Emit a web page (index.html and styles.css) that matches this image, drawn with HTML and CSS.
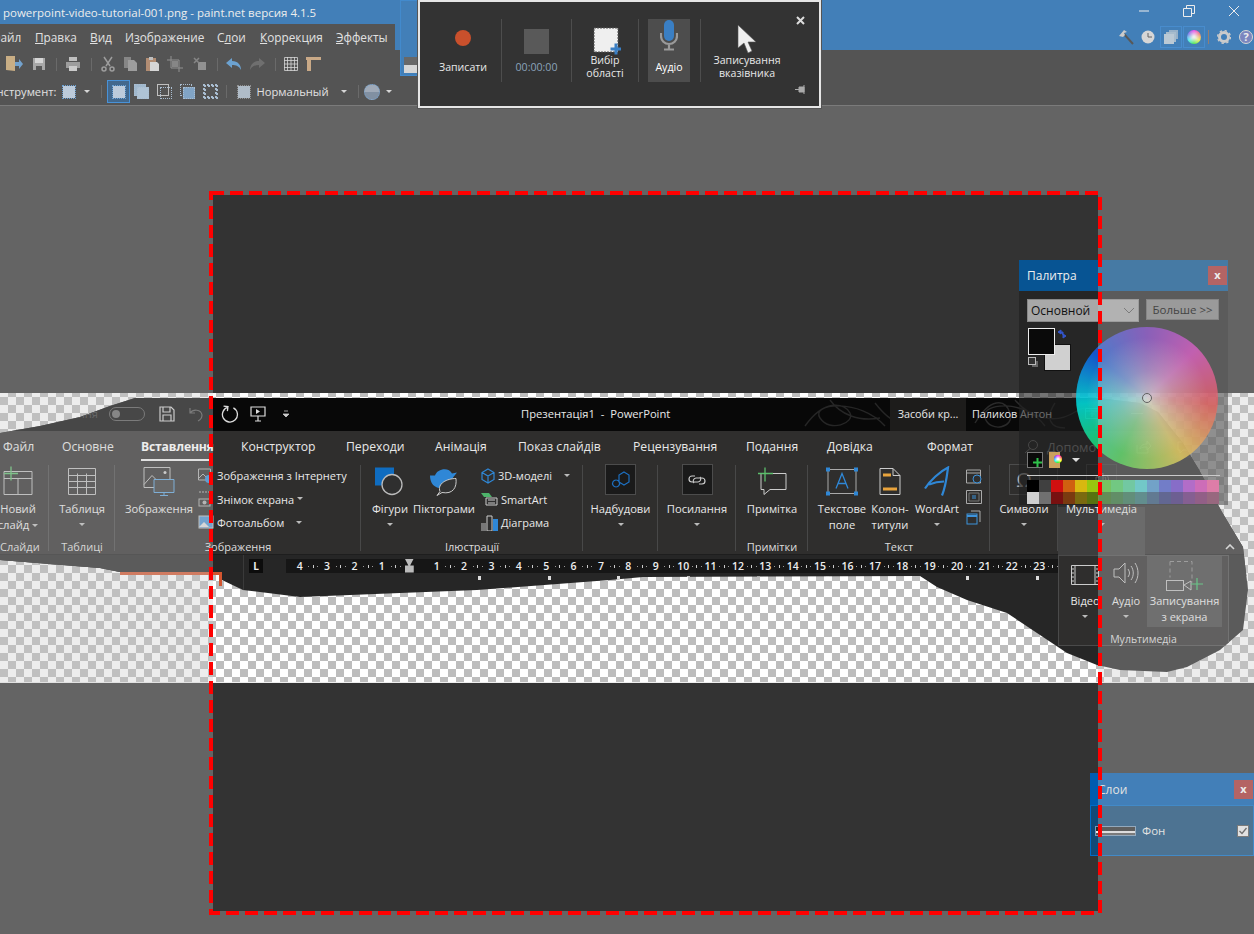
FILE: index.html
```html
<!DOCTYPE html>
<html lang="uk">
<head>
<meta charset="utf-8">
<title>paint.net</title>
<link rel="stylesheet" href="styles.css">
</head>
<body>
<div class="app">
  <header class="titlebar">
    <div class="title-row">
      <span class="app-title">powerpoint-video-tutorial-001.png - paint.net версия 4.1.5</span>
      <div class="win-ctl">
        <svg width="12" height="12" viewBox="0 0 12 12"><path d="M1 6h10" stroke="#fff" fill="none"/></svg>
        <svg width="12" height="12" viewBox="0 0 12 12"><path d="M.5 3.5h8v8h-8zM3.5 3V.5h8v8H9" stroke="#fff" fill="none"/></svg>
        <svg width="12" height="12" viewBox="0 0 12 12"><path d="M1 1l10 10M11 1L1 11" stroke="#fff" fill="none"/></svg>
      </div>
    </div>
    <div class="menu-row">
      <nav class="menu">
        <span class="m-file">Файл</span>
        <span class="m-edit"><u>П</u>равка</span>
        <span class="m-view"><u>В</u>ид</span>
        <span class="m-img">И<u>з</u>ображение</span>
        <span class="m-lay">С<u>л</u>ои</span>
        <span class="m-cor"><u>К</u>оррекция</span>
        <span><u>Э</u>ффекты</span>
      </nav>
      <div class="doc-tab"><div class="doc-thumb"></div></div>
      <div class="tool-icons">
        <svg width="16" height="16" viewBox="0 0 16 16"><path d="M6 5l9 10" stroke="#222" stroke-width="2"/><path d="M1 7l5-6 3 2-3 1 1 2-2 2z" fill="#ccc"/></svg>
        <svg width="14" height="14" viewBox="0 0 14 14"><circle cx="7" cy="7" r="6.5" fill="#ddd"/><path d="M7 3v4h4" stroke="#333" fill="none"/></svg>
        <div class="tool-box"><svg width="16" height="16" viewBox="0 0 16 16"><rect x="6" y="1" width="9" height="9" fill="#7fa6c8"/><rect x="3" y="3" width="10" height="10" fill="#97b6d0"/><rect x="1" y="5" width="10" height="10" fill="#b3c9dc"/></svg></div>
        <div class="tool-box"><div class="mini-wheel"></div></div>
        <div class="tool-sep"></div>
        <svg width="14" height="14" viewBox="0 0 14 14"><circle cx="7" cy="7" r="4.5" fill="none" stroke="#ccc" stroke-width="3"/><circle cx="7" cy="7" r="6.4" fill="none" stroke="#ccc" stroke-width="1.4" stroke-dasharray="2.4 2.6"/></svg>
        <div class="help">?</div>
      </div>
    </div>
  </header>

  <div class="toolbar">
    <svg class="t-folder" width="20" height="18" viewBox="0 0 20 18"><path d="M2 1h9v15l-9-1z" fill="#c9a264"/><path d="M11 7h4V4l4 5-4 5v-3h-4z" fill="#4a8fd0"/></svg>
    <svg class="t-save" width="14" height="14" viewBox="0 0 14 14"><path d="M1 1h12v12H1z" fill="#999"/><path d="M3 1h8v5H3z" fill="#ddd"/><path d="M4 9h6v4H4z" fill="#222"/></svg>
    <i class="sep"></i>
    <svg width="16" height="16" viewBox="0 0 16 16"><path d="M4 1h8v4H4z" fill="#bbb"/><path d="M1 6h14v6H1z" fill="#888"/><path d="M4 10h8v5H4z" fill="#ccc"/></svg>
    <i class="sep"></i>
    <svg width="16" height="16" viewBox="0 0 16 16"><path d="M4 1l6 9M12 1L6 10" stroke="#888" stroke-width="1.5" fill="none"/><circle cx="4" cy="13" r="2" fill="none" stroke="#888" stroke-width="1.5"/><circle cx="12" cy="13" r="2" fill="none" stroke="#888" stroke-width="1.5"/></svg>
    <svg width="15" height="16" viewBox="0 0 15 16"><path d="M1 1h7v11H1z" fill="#666"/><path d="M5 4h6l3 3v8H5z" fill="#888"/></svg>
    <svg width="15" height="16" viewBox="0 0 15 16"><path d="M1 2h10v13H1z" fill="#a8704a"/><path d="M4 1h4v3H4z" fill="#bbb"/><path d="M5 6h7l2 2v7H5z" fill="#ddd"/></svg>
    <svg width="16" height="16" viewBox="0 0 16 16"><path d="M4 0v12h12M0 4h12v12" stroke="#777" fill="none"/><path d="M5 5h6v6H5z" fill="#666"/></svg>
    <svg class="t-desel" width="14" height="14" viewBox="0 0 14 14"><path d="M5 5h8v8H5z" fill="#777"/><path d="M1 1l5 5M6 1L1 6" stroke="#666" stroke-width="1.5"/></svg>
    <i class="sep"></i>
    <svg width="16" height="13" viewBox="0 0 16 13"><path d="M6 0L0 5l6 5V7c4 0 7 1 9 5 0-5-3-9-9-9z" fill="#3f8fd4"/></svg>
    <svg width="16" height="13" viewBox="0 0 16 13"><path d="M10 0l6 5-6 5V7c-4 0-7 1-9 5 0-5 3-9 9-9z" fill="#444"/></svg>
    <i class="sep"></i>
    <svg width="14" height="14" viewBox="0 0 14 14"><path d="M.5.5h13v13H.5zM3.5 0v14M7 0v14M10.5 0v14M0 3.5h14M0 7h14M0 10.5h14" stroke="#ddd" fill="none" stroke-width=".8"/></svg>
    <svg width="16" height="16" viewBox="0 0 16 16"><path d="M1 1h15v3H6v11H2V4H1z" fill="#c99a68"/></svg>
  </div>

  <div class="optionsbar">
    <span class="tool-label"><span class="clip-i">Инструмент:</span></span>
    <span class="sel-icon"></span>
    <i class="caret"></i>
    <i class="sep"></i>
    <div class="modes">
      <span class="mode-active"><span class="sel-icon"></span></span>
      <span class="mode-icon m2"></span>
      <span class="mode-icon m3"></span>
      <span class="mode-icon m4"></span>
      <span class="mode-icon m5"></span>
    </div>
    <i class="sep"></i>
    <span class="sel-icon small"></span>
    <span class="mode-name">Нормальный</span>
    <i class="caret"></i>
    <i class="sep"></i>
    <span class="orb"></span>
    <i class="caret c-last"></i>
  </div>

  <main class="workspace">
    <section class="canvas">
      <div class="slide-edge"></div>
      <div class="ppt">
        <div class="ppt-title">
          <svg class="swirl" width="300" height="33" viewBox="0 0 300 33"><path d="M5 28C25 0 45 5 50 15S30 35 20 20 60 0 85 28M30 2c10 14 28 22 50 18M75 5c20 25 30 20 20 5" fill="none" stroke="#262626" stroke-width="1.4"/><path d="M175 25c15-25 30-25 35-10s-20 20-25 5 40-20 60 8M215 2c15 18 40 25 60 12s25 10 20 16M255 5c-10 15-5 25 10 25" fill="none" stroke="#2a2a2a" stroke-width="1.4"/></svg>
          <div class="qat">
            <span class="toggle-label">ння</span>
            <span class="toggle"><b></b></span>
            <svg width="16" height="16" viewBox="0 0 16 16"><path d="M1 1h11l3 3v11H1zM4 1v5h7V1M4 15v-6h8v6" fill="none" stroke="#ccc" stroke-width="1.2"/></svg>
            <svg width="16" height="16" viewBox="0 0 16 16"><path d="M2 2v5h5M2 7c3-4 11-4 12 2 0 3-2 5-4 6" fill="none" stroke="#555" stroke-width="1.2"/></svg>
            <svg class="q-redo" width="18" height="18" viewBox="0 0 18 18"><path d="M6.500 2.500a7.500 7.500 0 1 0 5 0M6 6.500v-4.500h-4.500" transform="rotate(8 9 9)" fill="none" stroke="#ddd" stroke-width="1.300"/></svg>
            <svg width="16" height="16" viewBox="0 0 16 16"><path d="M1 1h14v9H1zM8 10v5M5 15h6" fill="none" stroke="#ddd" stroke-width="1.2"/><path d="M6 3l4 2.5L6 8z" fill="#ddd"/></svg>
            <svg class="q-more" width="8" height="8" viewBox="0 0 8 8"><path d="M2 1h4M1 4h6l-3 3z" stroke="#ccc" fill="#ccc" stroke-width=".8"/></svg>
          </div>
          <span class="doc-title">Презентація1 &nbsp;-&nbsp; PowerPoint</span>
          <span class="tools-ctx">Засоби кр...</span>
          <span class="user">Паликов Антон</span>
          <svg class="w-mon" width="14" height="12" viewBox="0 0 14 12"><path d="M.5 .5h13v10H.5zM.5 3h13M7 9V5M5 6.5L7 4.5 9 6.5" stroke="#4a9a8a" fill="none"/></svg>
          <span class="w-min"></span>
        </div>
        <nav class="ppt-tabs">
          <span>Файл</span><span>Основне</span><span class="tab-active">Вставлення</span><span>Конструктор</span><span>Переходи</span><span>Анімація</span><span>Показ слайдів</span><span>Рецензування</span><span>Подання</span><span>Довідка</span><span>Формат</span>
          <span class="tab-search"><svg width="15" height="15" viewBox="0 0 15 15"><circle cx="9" cy="6" r="4.5" fill="none" stroke="#888"/><path d="M6 9.5L1 14" stroke="#888"/></svg>Допомо</span>
        </nav>
        <div class="tab-actions">
          <span class="act"><svg width="16" height="14" viewBox="0 0 16 14"><path d="M1 5v8h11V9M4 9c0-3 3-5 7-5V1l4 5-4 4V7c-3 0-5 0-7 2z" fill="none" stroke="#bbb"/></svg></span>
          <span class="act"><svg width="14" height="13" viewBox="0 0 14 13"><path d="M1 1h12v8H6l-3 3V9H1z" fill="none" stroke="#bbb"/></svg></span>
        </div>
        <div class="ppt-groups">
          <section class="grp g-slides">
            <div class="grp-body">
              <button class="big">
                <svg class="ico" width="30" height="30" viewBox="0 0 30 30"><path d="M1 5h28v23H1zM1 12h28M15 12v16" fill="none" stroke="#bbb"/><path d="M8 0v14M1 7h14" stroke="#5cbf6c" stroke-width="1.3"/></svg>
                <span>Новий<br>слайд<i class="tri in"></i></span>
              </button>
            </div>
            <h4>Слайди</h4>
          </section>
          <section class="grp g-tables">
            <div class="grp-body">
              <button class="big">
                <svg class="ico" width="28" height="28" viewBox="0 0 28 28"><path d="M.5 1h27v26H.5zM0 8h28M0 14h28M0 20h28M9.5 6v21M18.5 6v21" fill="none" stroke="#bbb"/></svg>
                <span>Таблиця</span><i class="tri"></i>
              </button>
            </div>
            <h4>Таблиці</h4>
          </section>
          <section class="grp g-images">
            <div class="grp-body">
              <button class="big b-img">
                <svg class="ico" width="32" height="30" viewBox="0 0 32 30"><path d="M1 1h26v20H1z" fill="none" stroke="#bbb"/><path d="M1 18l8-9 9 9" fill="none" stroke="#bbb"/><circle cx="22" cy="6" r="1.5" fill="#ccc"/><path d="M11 13h20v13H11z" fill="#3a3a3a" stroke="#5aa2dc"/><path d="M21 26v3M17 29h8" stroke="#5aa2dc"/></svg>
                <span>Зображення</span>
              </button>
              <ul class="mini-list">
                <li><svg width="16" height="16" viewBox="0 0 16 16"><path d="M.5 1h12v11H.5zM1 10l4-4 3 3" fill="none" stroke="#aaa"/><circle cx="11" cy="11" r="4" fill="#2f87d6"/></svg>Зображення з Інтернету</li>
                <li><svg width="16" height="16" viewBox="0 0 16 16"><path d="M1 1h13v8" fill="none" stroke="#aaa" stroke-dasharray="2 1"/><rect x="1" y="8" width="11" height="7" fill="none" stroke="#aaa"/><circle cx="6.5" cy="11.5" r="2" fill="#aaa"/></svg>Знімок екрана<i class="tri in"></i></li>
                <li><svg width="16" height="16" viewBox="0 0 16 16"><rect x="1" y="1" width="14" height="12" fill="#4a90d0" stroke="#bbb"/><path d="M1 12l5-5 5 5z" fill="#ddd"/></svg>Фотоальбом<i class="tri far"></i></li>
              </ul>
            </div>
            <h4>Зображення</h4>
          </section>
          <section class="grp g-illus">
            <div class="grp-body">
              <button class="big b-shape">
                <svg class="ico" width="32" height="30" viewBox="0 0 32 30"><rect x="1" y="1" width="19" height="18" fill="#0f6cc0"/><circle cx="18" cy="18" r="10" fill="#2f2f2f" stroke="#bbb" stroke-width="1.3"/></svg>
                <span>Фігури</span><i class="tri"></i>
              </button>
              <button class="big b-pict">
                <svg class="ico" width="30" height="30" viewBox="0 0 30 30"><path d="M1 9h5c2-7 14-9 17-2l5-1-4 5c0 8-9 12-16 10C3 19 1 14 1 9z" fill="#2f87d6"/><path d="M8 29l3-4c-3-8 7-13 16-13 1 9-3 16-14 14z" fill="#333" stroke="#ccc"/></svg>
                <span>Піктограми</span>
              </button>
              <ul class="mini-list l-3d">
                <li><svg width="14" height="16" viewBox="0 0 14 16"><path d="M7 1l6 3.500v7L7 15l-6-3.500v-7zM1 4.500L7 8l6-3.500M7 8v7" fill="none" stroke="#2f87d6" stroke-width="1.2"/></svg>3D-моделі<i class="tri far"></i></li>
                <li><svg width="17" height="14" viewBox="0 0 17 14"><path d="M0 1h8l3 4H3z" fill="#4db36a"/><path d="M5 6h11v7H5z" fill="#2f2f2f" stroke="#ccc"/><path d="M7 8h7M7 11h7" stroke="#ccc"/></svg>SmartArt</li>
                <li><svg width="17" height="16" viewBox="0 0 17 16"><path d="M0 8h5v8H0z" fill="#777"/><path d="M6 1h5v15H6z" fill="#2f2f2f" stroke="#ccc"/><path d="M12 4h5v12h-5z" fill="#2f87d6"/></svg>Діаграма</li>
              </ul>
            </div>
            <h4>Ілюстрації</h4>
          </section>
          <section class="grp g-add">
            <div class="grp-body">
              <button class="big boxed">
                <span class="ico-box"><svg width="20" height="20" viewBox="0 0 20 20"><path d="M13 2l5 3v7l-5 3-5-3V5zM5 10a3.500 3.500 0 1 0 .1 0" fill="none" stroke="#1d6fc0" stroke-width="1.2"/></svg></span>
                <span>Надбудови</span><i class="tri"></i>
              </button>
            </div>
          </section>
          <section class="grp g-link">
            <div class="grp-body">
              <button class="big boxed">
                <span class="ico-box"><svg width="20" height="14" viewBox="0 0 20 14"><path d="M8 3H5a3 3 0 0 0 0 6h6a3 3 0 0 0 2-5M12 11h3a3 3 0 0 0 0-6H9a3 3 0 0 0-2 5" fill="none" stroke="#ccc" stroke-width="1.2"/></svg></span>
                <span>Посилання</span><i class="tri"></i>
              </button>
            </div>
          </section>
          <section class="grp g-note">
            <div class="grp-body">
              <button class="big">
                <svg class="ico" width="30" height="28" viewBox="0 0 30 28"><path d="M4 6h25v16H13l-6 5v-5H4z" fill="none" stroke="#ccc"/><path d="M8 0v14M1 6h15" stroke="#5cbf6c" stroke-width="1.3"/></svg>
                <span>Примітка</span>
              </button>
            </div>
            <h4>Примітки</h4>
          </section>
          <section class="grp g-text">
            <div class="grp-body">
              <button class="big b-tb">
                <svg class="ico" width="32" height="28" viewBox="0 0 32 28"><path d="M2 2h28v24H2z" fill="none" stroke="#aaa"/><path d="M10 21l6-15 6 15M12 16h8" fill="none" stroke="#2f87d6" stroke-width="1.3"/><path d="M0 0h4v4H0zM28 0h4v4h-4zM0 24h4v4H0zM28 24h4v4h-4z" fill="#2f87d6"/></svg>
                <span>Текстове<br>поле</span>
              </button>
              <button class="big b-hf">
                <svg class="ico" width="22" height="28" viewBox="0 0 22 28"><path d="M1 1h13l7 7v19H1zM14 1v7h7" fill="none" stroke="#ccc"/><path d="M4 6h8v3H4zM4 20h14v3H4z" fill="#e8a33c"/></svg>
                <span>Колон-<br>титули</span>
              </button>
              <button class="big b-wa">
                <svg class="ico" width="26" height="30" viewBox="0 0 26 30"><path d="M1 22C6 14 16 5 24 1c-1 8-2 18-6 28M5 18c5-2 10-3 15-3" fill="none" stroke="#2f87d6" stroke-width="2.200"/></svg>
                <span>WordArt</span><i class="tri"></i>
              </button>
              <div class="mini-ico">
                <svg width="16" height="16" viewBox="0 0 16 16"><path d="M.5 2h14v13H.5zM0 5h15" fill="none" stroke="#aaa"/><circle cx="11" cy="11" r="4" fill="#2f2f2f" stroke="#3d93db"/></svg>
                <svg width="16" height="14" viewBox="0 0 16 14"><path d="M.5 .5h15v13H.5z" fill="none" stroke="#aaa"/><path d="M3 3h10v8H3z" fill="none" stroke="#777"/><path d="M6 6h4M6 8h4" stroke="#3d93db"/></svg>
                <svg width="15" height="16" viewBox="0 0 15 16"><path d="M5 1h9v11" fill="none" stroke="#aaa"/><rect x="1" y="4" width="10" height="10" fill="none" stroke="#3d93db"/><path d="M1 6h10" stroke="#3d93db" stroke-width="2"/></svg>
              </div>
            </div>
            <h4>Текст</h4>
          </section>
          <section class="grp g-sym">
            <div class="grp-body">
              <button class="big boxed">
                <span class="ico-box plain"><span class="omega">Ω</span></span>
                <span>Символи</span><i class="tri"></i>
              </button>
            </div>
          </section>
          <section class="grp g-media">
            <div class="grp-body">
              <button class="big boxed">
                <span class="ico-box plain"><svg width="16" height="16" viewBox="0 0 16 16"><path d="M2 5h3l4-4v14l-4-4H2zM11 5c1 2 1 4 0 6M13 3c2 3 2 7 0 10" fill="none" stroke="#aaa"/></svg></span>
                <span>Мультимедіа</span><i class="tri"></i>
              </button>
            </div>
          </section>
          <svg class="collapse" width="10" height="6" viewBox="0 0 10 6"><path d="M1 5l4-4 4 4" fill="none" stroke="#ddd" stroke-width="1.600"/></svg>
        </div>
        <div class="ruler-bar">
          <span class="l-box">L</span>
          <div class="ruler">
            <span>4</span><span>3</span><span>2</span><span>1</span><span class="r-mark"></span><span>1</span><span>2</span><span>3</span><span>4</span><span>5</span><span>6</span><span>7</span><span>8</span><span>9</span><span>10</span><span>11</span><span>12</span><span>13</span><span>14</span><span>15</span><span>16</span><span>17</span><span>18</span><span>19</span><span>20</span><span>21</span><span>22</span><span>23</span>
          </div>
          <div class="ticks"><i></i><i></i><i></i><i></i><i></i><i></i><i></i><i></i><i></i></div>
        </div>
        <div class="media-pop">
          <div class="pop-body">
            <button class="pop-btn p-vid">
              <svg width="28" height="20" viewBox="0 0 28 20"><path d="M.5 .5h27v19H.5zM4 0v20M24 0v20" fill="none" stroke="#ccc"/><path d="M2 3v14M26 3v14" stroke="#ccc" stroke-dasharray="2 2"/></svg>
              <span>Відео</span><i class="tri"></i>
            </button>
            <button class="pop-btn p-aud">
              <svg width="27" height="24" viewBox="0 0 27 24"><path d="M1 8h5l6-6v20l-6-6H1zM15 8c2 3 2 5 0 8M18 5c3 4 3 10 0 14M22 2c4 6 4 14 0 20" fill="none" stroke="#bbb"/></svg>
              <span>Аудіо</span><i class="tri"></i>
            </button>
            <button class="pop-btn p-rec">
              <svg width="38" height="30" viewBox="0 0 38 30"><path d="M4 .5h22v21" fill="none" stroke="#888" stroke-dasharray="4 3"/><path d="M4 .5v16" fill="none" stroke="#888" stroke-dasharray="4 3"/><rect x=".5" y="19.500" width="17" height="10" fill="none" stroke="#bbb"/><path d="M18 24l7-4v9z" fill="none" stroke="#bbb"/><path d="M31 17v12M25 23h12" stroke="#3cc36a" stroke-width="1.200"/></svg>
              <span>Записування<br>з екрана</span>
            </button>
          </div>
          <h4>Мультимедіа</h4>
        </div>
      </div>
    </section>

    <aside class="palette">
      <div class="pal-title"><span>Палитра</span><span class="x">x</span></div>
      <div class="pal-body">
        <div class="pal-top">
          <div class="pal-select">Основной<svg width="12" height="7" viewBox="0 0 12 7"><path d="M1 1l5 5 5-5" fill="none" stroke="#555"/></svg></div>
          <div class="pal-more">Больше &gt;&gt;</div>
        </div>
        <div class="pal-main">
          <div class="pal-left">
            <div class="swatches">
              <span class="sw-back"></span><span class="sw-fore"></span>
              <svg class="sw-swap" width="10" height="10" viewBox="0 0 10 10"><path d="M1 3l3-2v4zM9 7L6 5v4zM3 3h3v3" fill="#35c" stroke="#35c"/></svg>
              <span class="sw-reset"></span>
            </div>
            <div class="pal-tools">
              <span class="add-sw"><svg width="9" height="9" viewBox="0 0 9 9"><path d="M4.500 0v9M0 4.500h9" stroke="#2fc14a" stroke-width="2"/></svg></span>
              <span class="book"><b class="mini-wheel"></b></span>
              <i class="tri big-tri"></i>
            </div>
          </div>
          <div class="wheel"><span class="wheel-dot"></span></div>
        </div>
        <div class="pal-line"></div>
        <div class="pal-colors">
          <i class="c1"></i><i class="c2"></i><i class="c3"></i><i class="c4"></i><i class="c5"></i><i class="c6"></i><i class="c7"></i><i class="c8"></i><i class="c9"></i><i class="c10"></i><i class="c11"></i><i class="c12"></i><i class="c13"></i><i class="c14"></i><i class="c15"></i><i class="c16"></i>
          <i class="d1"></i><i class="d2"></i><i class="d3"></i><i class="d4"></i><i class="d5"></i><i class="d6"></i><i class="d7"></i><i class="d8"></i><i class="d9"></i><i class="d10"></i><i class="d11"></i><i class="d12"></i><i class="d13"></i><i class="d14"></i><i class="d15"></i><i class="d16"></i>
        </div>
      </div>
    </aside>

    <aside class="layers">
      <div class="lay-title"><span>Слои</span><span class="x">x</span></div>
      <div class="lay-row">
        <span class="lay-thumb"></span>
        <span class="lay-name">Фон</span>
        <svg class="lay-check" width="12" height="12" viewBox="0 0 12 12"><rect x=".5" y=".5" width="11" height="11" fill="#eee" stroke="#555"/><path d="M2.500 6l2.500 2.500L9.500 3" fill="none" stroke="#444" stroke-width="1.300"/></svg>
      </div>
    </aside>
  </main>

  <div class="selection">
    <svg class="dash" width="893" height="724" viewBox="0 0 893 724"><rect x="2" y="2" width="889" height="720" fill="none" stroke="#f00" stroke-width="4" stroke-dasharray="13 6"/></svg>
  </div>

  <aside class="recorder">
    <div class="rec-item r-rec">
      <div class="rec-ico"><span class="rec-dot"></span></div>
      <div class="rec-lab">Записати</div>
    </div>
    <div class="rec-item r-time">
      <div class="rec-ico"><span class="rec-stop"></span></div>
      <div class="rec-lab time">00:00:00</div>
    </div>
    <div class="rec-item r-area">
      <div class="rec-ico">
        <svg width="28" height="28" viewBox="0 0 28 28"><rect x="1" y="1" width="24" height="24" fill="#efefef" stroke="#555" stroke-dasharray="2 1"/><path d="M22 17h3v4h4v3h-4v4h-3v-4h-4v-3h4z" transform="translate(-.5 -.5)" fill="#3a7fc4"/></svg>
      </div>
      <div class="rec-lab">Вибір<br>області</div>
    </div>
    <div class="rec-item r-aud">
      <div class="aud-on">
        <div class="rec-ico">
          <svg width="18" height="31" viewBox="0 0 18 31"><rect x="4" y="0" width="10" height="21" rx="5" fill="#3a7fc4"/><path d="M1 13v3a8 8 0 0 0 16 0v-3M9 24v5M4 29.500h10" fill="none" stroke="#9a9a9a" stroke-width="2.200"/></svg>
        </div>
        <div class="rec-lab on">Аудіо</div>
      </div>
    </div>
    <div class="rec-item r-ptr">
      <div class="rec-ico">
        <svg width="20" height="30" viewBox="0 0 20 30"><path d="M1 1v23l6-5 4 10 4-2-4-9h8z" fill="#efefef" stroke="#555" stroke-width=".6"/></svg>
      </div>
      <div class="rec-lab">Записування<br>вказівника</div>
    </div>
    <div class="rec-side">
      <svg width="9" height="9" viewBox="0 0 9 9"><path d="M1 1l7 7M8 1L1 8" stroke="#ddd" stroke-width="2"/></svg>
      <svg width="11" height="9" viewBox="0 0 11 9"><path d="M0 4.500h4M4 2h5v5H4zM9 0v9" fill="#aaa" stroke="#aaa"/></svg>
    </div>
  </aside>
</div>
</body>
</html>
```
FILE: styles.css
```css
* { box-sizing: border-box; }
html, body { margin: 0; height: 100%; }
body { overflow: hidden; background: #333; font-family: "Open Sans", "Noto Sans", "DejaVu Sans", sans-serif; color: #eee; }
ul { list-style: none; margin: 0; padding: 0; }
h4 { margin: 0; font-weight: 400; }
button { all: unset; box-sizing: border-box; }
i { font-style: normal; display: block; }
.app { position: relative; width: 1254px; height: 934px; overflow: hidden; }

.titlebar { background: #005cb0; height: 50px; position: relative; }
.title-row { height: 24px; display: flex; align-items: center; justify-content: space-between; }
.app-title { font-size: 11.500px; margin-left: 3px; color: #fff; white-space: nowrap; }
.win-ctl { display: flex; gap: 33px; margin-right: 14px; margin-top: -3px; }
.menu-row { display: flex; height: 26px; }
.menu { width: 395px; background: #1c1c1c; display: flex; align-items: center; font-size: 11.800px; color: #eee; overflow: hidden; white-space: nowrap; }
.menu span { flex: none; }
.m-file { margin-left: -9px; width: 44px; }
.m-edit { width: 55px; }
.m-view { width: 35px; }
.m-img { width: 92px; }
.m-lay { width: 43px; }
.m-cor { width: 76px; }
.doc-tab { position: relative; width: 19px; height: 76px; margin: -24px 0 0 5px; background: #005cb0; border: 1px solid #006cd0; }
.doc-thumb { position: absolute; left: 3px; top: 56px; width: 15px; height: 16px; background: linear-gradient(#3a3a3a 0 50%, #ddd 50%); }
.tool-icons { position: absolute; right: 0; top: 24px; width: 136px; display: flex; align-items: center; height: 26px; }
.tool-icons > svg:nth-child(1) { margin-right: 7px; flex: none; }
.tool-icons > svg:nth-child(2) { margin-right: 5px; flex: none; }
.tool-box { width: 22px; height: 22px; border: 1px solid #0a6fd0; display: flex; align-items: center; justify-content: center; margin-right: 1px; flex: none; }
.mini-wheel { display: block; width: 14px; height: 14px; border-radius: 50%; background: radial-gradient(#fff 10%, transparent 75%), conic-gradient(#f0f, #f44, #ff0, #0f0, #0ff, #44f, #f0f); }
.tool-sep { width: 1px; height: 14px; background: #7a5a4a; margin: 0 8px 0 2px; flex: none; }
.tool-icons > svg:nth-child(6) { margin-right: 8px; flex: none; }
.help { width: 14px; height: 14px; border-radius: 50%; background: #5566bb; border: 1px solid #ddd; font-size: 11px; line-height: 12px; text-align: center; font-weight: 700; color: #fff; flex: none; }

.toolbar, .optionsbar { background: #1c1c1c; display: flex; align-items: center; }
.toolbar { height: 28px; padding-left: 4px; gap: 7px; }
.t-save { margin-left: 1px; }
.t-desel { margin-left: 3px; }
.sep { width: 1px; height: 13px; background: #3d3d3d; margin: 0 1px 0 3px; flex: none; }
.optionsbar { height: 28px; border-bottom: 1px solid #555; font-size: 11.200px; gap: 6px; }
.optionsbar .sep { margin: 0 2px; }
.tool-label { width: 57px; overflow: hidden; white-space: nowrap; flex: none; }
.clip-i { display: inline-block; margin-left: -12px; }
.sel-icon { width: 12px; height: 12px; background: #b6cde4; outline: 1px dotted #3f8fdc; flex: none; }
.sel-icon.small { background: #a5b7c8; outline-color: #777; margin-left: 3px; }
.caret { width: 0; height: 0; border: 3.5px solid transparent; border-top: 3.5px solid #ddd; border-bottom: 0; margin: 0 3px; flex: none; }
.c-last { margin-left: 0; }
.modes { display: flex; align-items: center; gap: 8px; margin-left: -3px; }
.mode-active { width: 23px; height: 23px; background: #003a70; border: 1px solid #0a78e0; display: flex; align-items: center; justify-content: center; margin-right: -4.500px; flex: none; }
.mode-icon { width: 15px; height: 15px; flex: none; position: relative; }
.mode-icon::before, .mode-icon::after { content: ""; position: absolute; width: 10px; height: 10px; border: 1px dotted #9ab8d6; }
.mode-icon::before { left: 0; top: 0; background: #8db0d0; }
.mode-icon::after { right: 0; bottom: 0; }
.m2::after { background: #a3c0dc; }
.m3::before { background: none; border: 1px solid #bbb; }
.m4::after { background: #5f92c4; }
.m4::before { background: none; }
.m5::before, .m5::after { border: 2px dotted #9ab8d6; background: none; }
.mode-name { margin: 0 3px 0 1px; color: #eee; }
.orb { width: 16px; height: 16px; border-radius: 50%; background: linear-gradient(#8c9cb0 50%, #5e7590 50%); border: 1px dotted #4c94dc; flex: none; margin-left: -3px; }

.workspace { position: relative; height: 828px; background: #333; padding-top: 287px; }
.canvas { position: relative; height: 290px; background: repeating-conic-gradient(#bdbdbd 0 25%, #fff 0 50%) 0 -4px / 16px 16px; border-bottom: 1px solid #eee; }
.slide-edge { position: absolute; left: 120px; top: 179px; width: 102px; height: 14px; border-top: 3px solid #d4552f; border-right: 3px solid #d4552f; }
.ppt { position: absolute; left: 0; top: 0; width: 1254px; height: 290px; padding-top: 5px; background: #262626; clip-path: polygon(0 40px, 40px 33px, 80px 24px, 110px 13px, 135px 5px, 1098px 5px, 1140px 10px, 1158px 19px, 1182px 49px, 1198px 75px, 1222px 119px, 1243px 154px, 1248px 197px, 1243px 237px, 1220px 257px, 1187px 274px, 1167px 279px, 1120px 277px, 1097px 272px, 1067px 260px, 1037px 240px, 1007px 220px, 967px 207px, 937px 194px, 920px 183px, 643px 184px, 610px 187px, 477px 197px, 400px 200px, 300px 204px, 243px 197px, 222px 187px, 222px 179px, 120px 179px, 100px 175px, 0 167px); font-size: 11.200px; color: #e8e8e8; }
.ppt-title { height: 33px; padding-bottom: 2px; background: #080808; display: flex; align-items: center; position: relative; font-size: 11.200px; }
.qat { display: flex; align-items: center; gap: 13px; margin-left: 76px; width: 220px; flex: none; position: relative; }
.toggle-label { color: #3a3a3a; width: 22px; margin-right: -2px; text-align: right; }
.toggle { width: 36px; height: 14px; border-radius: 7px; border: 1px solid #555; position: relative; margin-right: 1px; }
.toggle b { position: absolute; left: 2px; top: 2px; width: 8px; height: 8px; border-radius: 50%; background: #666; }
.q-redo { margin: 0 -2px 0 4px; }
.q-more { margin-left: 3px; }
.doc-title { margin-left: 225px; width: 369px; flex: none; position: relative; }
.swirl { position: absolute; left: 800px; top: 0; }
.tools-ctx { background: #1d1c1b; height: 33px; margin-bottom: -2px; width: 76px; line-height: 31px; text-align: center; flex: none; position: relative; font-size: 10.800px; }
.user { margin-left: 6px; width: 113px; flex: none; position: relative; font-size: 10.800px; }
.w-mon { margin-right: 32px; flex: none; position: relative; }
.w-min { width: 12px; height: 1px; background: #888; position: relative; }
.ppt-tabs { height: 31px; background: #2f2e2d; display: grid; grid-template-columns: 59px 79px 100px 105px 89px 83px 115px 113px 81px 100px 92px 120px; align-items: center; padding-left: 3px; font-size: 12.200px; white-space: nowrap; position: relative; }
.tab-active { font-weight: 700; position: relative; color: #fff; letter-spacing: -.2px; }
.tab-active::after { content: ""; position: absolute; left: 0; width: 72px; bottom: -6px; height: 2px; background: #eee; }
.tab-search { display: flex; align-items: center; gap: 8px; color: #999; margin-left: 5px; font-size: 12.800px; }
.tab-actions { position: absolute; left: 1128px; top: 43px; display: flex; gap: 8px; }
.act { width: 32px; height: 22px; background: #3a3a3a; display: flex; align-items: center; justify-content: center; }
.ppt-groups { height: 93px; background: #2f2e2d; display: grid; grid-template-columns: 49px 66px 246px 222px 75px 78px 72px 182px 68px 87px; position: relative; border-bottom: 1px solid #1e1e1e; }
.grp { position: relative; display: flex; flex-direction: column; }
.grp::after { content: ""; position: absolute; right: 0; top: 3px; bottom: 4px; width: 1px; background: #484848; }
.g-media::after { display: none; }
.grp-body { height: 77px; display: flex; padding-top: 4px; }
.grp h4 { font-size: 11px; text-align: center; line-height: 15px; color: #ddd; }
.g-slides h4 { padding-right: 12px; }
.big { display: flex; flex-direction: column; align-items: center; width: 100%; text-align: center; line-height: 16px; color: #e8e8e8; font-size: 11.200px; }
.big .ico { height: 31px; margin-bottom: 4px; }
.big span { white-space: nowrap; }
.g-slides .big { width: 36px; }
.tri { width: 0; height: 0; border: 3px solid transparent; border-top: 3px solid #bbb; border-bottom: 0; margin-top: 6px; }
.tri.in { display: inline-block; vertical-align: middle; margin: 0 0 2px 3px; }
.tri.far { margin: 0 0 0 12px; }
.b-img { width: 72px; margin-left: 8px; flex: none; }
.mini-list { margin: -2px 0 0 3px; font-size: 11px; line-height: 23.500px; white-space: nowrap; }
.mini-list li { display: flex; align-items: center; }
.mini-list li svg { margin-right: 3px; flex: none; }
.mini-list .tri { margin-top: 0; }
.b-shape { width: 38px; margin-left: 10px; flex: none; }
.b-pict { width: 66px; margin-left: 2px; flex: none; }
.l-3d { margin-left: 4px; }
.l-3d li { height: 23.500px; }
.boxed { margin-top: -2px; }
.boxed .ico-box { width: 31px; height: 31px; background: #1a1a1a; border: 1px solid #4c4c4c; display: flex; align-items: center; justify-content: center; margin-bottom: 6px; }
.ico-box.plain { background: transparent; }
.omega { font-size: 20px; color: #aaa; }
.b-tb { width: 50px; flex: none; margin-left: 9px; }
.b-hf { width: 46px; flex: none; }
.b-wa { width: 48px; flex: none; }
.mini-ico { display: flex; flex-direction: column; gap: 6px; margin: 2px 0 0 5px; flex: none; }
.g-media { background: #3e3e3e; height: 48px; margin-top: 45px; }
.g-media .grp-body { margin-top: -45px; height: 93px; }
.collapse { position: absolute; left: 1225px; top: 82px; }
.ruler-bar { height: 21px; background: #262626; display: flex; align-items: center; position: relative; border-left: 243px solid #262626; }
.ruler-bar::before { content: ""; position: absolute; left: 0; top: 0; bottom: -15px; width: 1px; background: #3a3a3a; }
.l-box { width: 14px; height: 14px; background: #0c0c0c; color: #eee; font-size: 10px; font-weight: 700; line-height: 14px; text-align: center; margin-left: 6px; flex: none; }
.ruler { margin-left: 24px; width: 773px; height: 14px; background: #161616; display: flex; font-size: 10.500px; line-height: 14px; color: #eee; flex: none; font-weight: 600; transform: translateX(-1px); }
.ruler span { width: 27.400px; flex: none; text-align: center; position: relative; }
.ruler span::after { content: ""; position: absolute; right: -5px; top: 6px; width: 10px; height: 3px; background: linear-gradient(#999, #999) 0 1px / 1px 1px no-repeat, linear-gradient(#ccc, #ccc) 4.500px 0 / 1px 3px no-repeat, linear-gradient(#999, #999) 9px 1px / 1px 1px no-repeat; }
.r-mark { background: #bbb; clip-path: polygon(0 0, 100% 0, 60% 50%, 100% 50%, 100% 100%, 0 100%, 0 50%, 40% 50%); width: 9px !important; margin: 0 9.200px; }
.r-mark::after { display: none; }
.ticks { position: absolute; left: 235px; bottom: -4px; display: flex; gap: 66.700px; }
.ticks i { width: 3px; height: 4px; background: #ddd; }
.media-pop { position: absolute; left: 1058px; top: 162px; width: 171px; height: 91px; background: #2f2e2d; border: 1px solid #4a4a4a; }
.pop-body { display: flex; height: 71px; }
.pop-btn { display: flex; flex-direction: column; align-items: center; text-align: center; font-size: 11px; line-height: 16px; color: #e8e8e8; padding-top: 9px; flex: none; }
.pop-btn svg { height: 20px; margin-bottom: 8px; }
.pop-btn span { white-space: nowrap; }
.p-vid { width: 52px; }
.p-aud { width: 36px; margin-left: -3px; padding-top: 5px; }
.p-aud svg { height: 24px; margin-bottom: 8px; }
.p-rec { width: 75px; margin-left: 3px; height: 71px; background: #444; padding-top: 5px; }
.p-rec svg { height: 30px; margin-bottom: 2px; }
.media-pop h4 { font-size: 10.500px; text-align: center; line-height: 24px; padding-left: 0; color: #ddd; }

.palette { position: absolute; left: 1019px; top: 154px; width: 209px; height: 245px; }
.pal-title { height: 31px; background: rgba(0, 90, 165, .85); display: flex; align-items: center; justify-content: space-between; padding: 0 1px 0 8px; font-size: 12px; color: #eee; }
.x { width: 19px; height: 19px; background: #a33; font-size: 11px; line-height: 17px; text-align: center; color: #fff; font-weight: 700; }
.pal-body { height: 214px; background: rgba(30, 30, 30, .62); padding: 8px 8px 0; }
.pal-top { display: flex; gap: 7px; align-items: flex-start; }
.pal-select { width: 112px; height: 23px; background: #a8a8a8; border: 1px solid #888; color: #111; font-size: 12px; display: flex; align-items: center; justify-content: space-between; padding: 0 3px; }
.pal-more { width: 73px; height: 21px; background: #838383; border: 1px solid #666; color: #000; font-size: 11.500px; line-height: 19px; text-align: center; white-space: nowrap; }
.pal-main { display: flex; height: 141px; margin-top: 5px; }
.pal-left { width: 49px; display: flex; flex-direction: column; justify-content: space-between; flex: none; }
.swatches { position: relative; height: 44px; margin-left: 1px; }
.sw-fore, .sw-back { position: absolute; width: 27px; height: 27px; }
.sw-fore { left: 0; top: 1px; background: #0a0a0a; border: 1px solid #eee; }
.sw-back { left: 16px; top: 17px; background: #d0d0d0; border: 1px solid #111; }
.sw-swap { position: absolute; left: 29px; top: 2px; }
.sw-reset { position: absolute; left: 0; top: 30px; width: 8px; height: 8px; background: #333; border: 1px solid #bbb; box-shadow: 3px 3px 0 -1px #666; }
.pal-tools { display: flex; align-items: center; gap: 6px; }
.add-sw { width: 16px; height: 16px; background: #0a0a0a; border: 1px solid #777; display: flex; align-items: flex-end; justify-content: flex-end; flex: none; }
.book { width: 11px; height: 16px; background: #caa15e; flex: none; position: relative; margin-right: 4px; }
.book .mini-wheel { position: absolute; left: 5px; top: 3px; width: 8px; height: 8px; }
.big-tri { margin: 0 0 0 2px; border-width: 4px; border-top: 4px solid #ddd; border-bottom: 0; }
.wheel { width: 142px; height: 142px; border-radius: 50%; flex: none; position: relative; opacity: .82; background: radial-gradient(circle closest-side, rgba(230,230,230,.9) 0, rgba(230,230,230,.4) 38%, rgba(230,230,230,0) 85%), conic-gradient(from 0deg, #7a2fd0, #e030c0 45deg, #f03030 95deg, #f0d030 150deg, #30e040 205deg, #00e8e8 265deg, #1060f0 310deg, #7a2fd0); }
.wheel-dot { position: absolute; left: 66px; top: 66px; width: 10px; height: 10px; border-radius: 50%; border: 1px solid #222; background: rgba(255,255,255,.4); }
.pal-line { height: 1px; background: #ccc; margin-top: 7px; }
.pal-colors { display: grid; grid-template-columns: repeat(16, 12px); grid-auto-rows: 12px; margin-top: 4px; }
.c1 { background: #000; } .c2 { background: #404040; } .c3 { background: #d01010; } .c4 { background: #d06010; } .c5 { background: #d8b810; } .c6 { background: #98c810; } .c7 { background: #50c030; } .c8 { background: #48c860; } .c9 { background: #48c890; } .c10 { background: #48c8c8; } .c11 { background: #4890c8; } .c12 { background: #4858c8; } .c13 { background: #6840c8; } .c14 { background: #a840c8; } .c15 { background: #d040b0; } .c16 { background: #e85898; }
.d1 { background: #d0d0d0; } .d2 { background: #707070; } .d3 { background: #781010; } .d4 { background: #7a3a10; } .d5 { background: #7a6a10; } .d6 { background: #587210; } .d7 { background: #347020; } .d8 { background: #307238; } .d9 { background: #307254; } .d10 { background: #307272; } .d11 { background: #305478; } .d12 { background: #303878; } .d13 { background: #402c78; } .d14 { background: #642c78; } .d15 { background: #782c68; } .d16 { background: #803a5c; }

.layers { position: absolute; left: 1090px; top: 667px; width: 164px; height: 83px; }
.lay-title { height: 32px; background: #005cb0; display: flex; align-items: center; justify-content: space-between; padding: 0 1px 0 8px; font-size: 12px; color: #eee; }
.lay-row { height: 51px; background: #114a78; border: 1px solid #006cc8; display: flex; align-items: center; font-size: 11.500px; color: #eee; padding-left: 4px; }
.lay-thumb { width: 41px; height: 10px; background: linear-gradient(#2a2a2a 0 50%, #e8e8e8 50% 80%, #555 80%); border: 1px solid #7a9ab8; flex: none; }
.lay-name { margin-left: 6px; flex: 1; }
.lay-check { margin-right: 4px; }

.selection { position: absolute; left: 213px; top: 195px; width: 885px; height: 716px; box-shadow: 0 0 0 1400px rgba(200, 200, 200, .33); }
.dash { position: absolute; left: -4px; top: -4px; }

.recorder { position: absolute; left: 418px; top: 0; width: 403px; height: 108px; background: #333; border: 2px solid #e6e6e6; outline: 1px solid #555; display: flex; align-items: flex-start; padding-top: 17px; }
.rec-item { height: 63px; display: flex; flex-direction: column; align-items: center; border-right: 1px solid #4d4d4d; flex: none; }
.rec-ico { height: 33px; display: flex; align-items: center; justify-content: center; }
.rec-lab { height: 30px; display: flex; align-items: center; text-align: center; font-size: 10.600px; line-height: 13px; color: #e8e8e8; white-space: nowrap; }
.rec-lab.time { color: #8ba4bb; }
.rec-lab.on { color: #fff; }
.r-rec { width: 82px; padding-left: 5px; }
.rec-dot { width: 16px; height: 16px; border-radius: 50%; background: #c9502c; margin-top: 4px; }
.r-time { width: 70px; }
.rec-stop { width: 25px; height: 25px; background: #595959; margin-top: 11px; }
.r-area { width: 67px; }
.r-area svg { margin-top: 10px; margin-left: 4px; }
.r-aud { width: 62px; }
.aud-on { width: 42px; height: 63px; background: #4d4d4d; margin-left: -1px; display: flex; flex-direction: column; align-items: center; }
.r-ptr { width: 92px; border-right: 0; }
.r-ptr svg { margin-top: 6px; }
.rec-side { flex: 1; height: 78px; margin-top: -3px; padding-right: 12px; display: flex; flex-direction: column; justify-content: space-between; align-items: center; }
```
